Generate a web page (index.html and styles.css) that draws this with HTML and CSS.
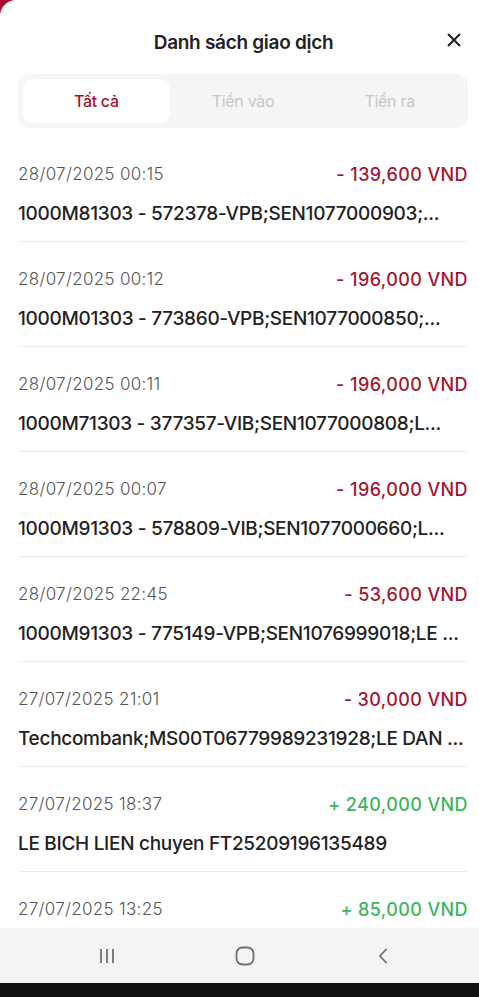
FILE: index.html
```html
<!DOCTYPE html>
<html lang="vi">
<head>
    <meta charset="UTF-8">
    <meta name="viewport" content="width=device-width, initial-scale=1.0">
    <title>Danh sách giao dịch</title>
    <link rel="stylesheet" href="styles.css">
</head>
<body>

    <div class="sheet">
        <!-- Header -->
        <div class="header">
            <h1>Danh sách giao dịch</h1>
            <span class="close">
                <svg width="14" height="14" viewBox="0 0 14 14">
                    <path d="M1.5 1.5 L12.5 12.5 M12.5 1.5 L1.5 12.5" stroke="#1f1f1f" stroke-width="2" stroke-linecap="round"/>
                </svg>
            </span>
        </div>

        <!-- Tabs -->
        <div class="tabs">
            <div class="tab active">Tất cả</div>
            <div class="tab">Tiền vào</div>
            <div class="tab">Tiền ra</div>
        </div>

        <!-- Transaction list -->
        <div class="list">
            <div class="item">
                <div class="top">
                    <span class="date">28/07/2025 00:15</span>
                    <span class="amount out">- 139,600 VND</span>
                </div>
                <div class="desc">1000M81303 - 572378-VPB;SEN1077000903;...</div>
            </div>
            <div class="item">
                <div class="top">
                    <span class="date">28/07/2025 00:12</span>
                    <span class="amount out">- 196,000 VND</span>
                </div>
                <div class="desc">1000M01303 - 773860-VPB;SEN1077000850;...</div>
            </div>
            <div class="item">
                <div class="top">
                    <span class="date">28/07/2025 00:11</span>
                    <span class="amount out">- 196,000 VND</span>
                </div>
                <div class="desc">1000M71303 - 377357-VIB;SEN1077000808;L...</div>
            </div>
            <div class="item">
                <div class="top">
                    <span class="date">28/07/2025 00:07</span>
                    <span class="amount out">- 196,000 VND</span>
                </div>
                <div class="desc">1000M91303 - 578809-VIB;SEN1077000660;L...</div>
            </div>
            <div class="item">
                <div class="top">
                    <span class="date">28/07/2025 22:45</span>
                    <span class="amount out">- 53,600 VND</span>
                </div>
                <div class="desc">1000M91303 - 775149-VPB;SEN1076999018;LE ...</div>
            </div>
            <div class="item">
                <div class="top">
                    <span class="date">27/07/2025 21:01</span>
                    <span class="amount out">- 30,000 VND</span>
                </div>
                <div class="desc">Techcombank;MS00T06779989231928;LE DAN ...</div>
            </div>
            <div class="item">
                <div class="top">
                    <span class="date">27/07/2025 18:37</span>
                    <span class="amount in">+ 240,000 VND</span>
                </div>
                <div class="desc">LE BICH LIEN chuyen FT25209196135489</div>
            </div>
            <div class="item last">
                <div class="top">
                    <span class="date">27/07/2025 13:25</span>
                    <span class="amount in">+ 85,000 VND</span>
                </div>
            </div>
        </div>
    </div>

    <!-- Android navigation bar -->
    <div class="navbar">
        <svg width="16" height="16" viewBox="0 0 16 16">
            <path d="M2 1 V15 M8 1 V15 M14 1 V15" stroke="#707070" stroke-width="1.8"/>
        </svg>
        <svg width="20" height="20" viewBox="0 0 20 20">
            <rect x="1.5" y="1.5" width="17" height="17" rx="6" fill="none" stroke="#707070" stroke-width="1.8"/>
        </svg>
        <svg width="12" height="18" viewBox="0 0 12 18">
            <path d="M9.5 2 L3 9 L9.5 16" fill="none" stroke="#707070" stroke-width="1.8"/>
        </svg>
    </div>
    <div class="bottom-bar"></div>

</body>
</html>
```

FILE: styles.css
```css
body {
    font-family: 'Inter', sans-serif;
    margin: 0;
    padding: 0;
    background-color: #a3122c;
    height: 997px;
    display: flex;
    flex-direction: column;
    overflow: hidden;
    color: #222;
}

.sheet {
    background: white;
    border-radius: 16px 0 0 0;
    flex: 1;
    overflow: hidden;
    padding: 0 10px 0 18px;
}

.header {
    display: flex;
    justify-content: center;
    align-items: center;
    height: 84px;
    position: relative;
}

.header h1 {
    margin: 0;
    font-size: 19px;
    font-weight: 600;
    color: #222;
    letter-spacing: -0.3px;
}

.close {
    position: absolute;
    right: 8px;
    top: 31px;
}

.tabs {
    display: flex;
    background-color: #f5f5f5;
    border-radius: 12px;
    padding: 5px;
    margin: -10px 0 0 0;
    width: 440px;
}

.tab {
    flex: 1;
    text-align: center;
    height: 44px;
    line-height: 44px;
    font-size: 16px;
    color: #c6c6c6;
    border-radius: 10px;
    letter-spacing: -0.3px;
}

.tab.active {
    background-color: white;
    color: #a3122c;
    font-weight: 500;
}

.list {
    padding-top: 13px;
}

.item {
    border-bottom: 1px solid #ececec;
    padding: 25px 0 15px 0;
    margin-right: 1px;
}

.item:first-child {
    padding-top: 21px;
}

.item.last {
    border-bottom: none;
}

.top {
    display: flex;
    justify-content: space-between;
    align-items: center;
    height: 24px;
}

.date {
    font-size: 17px;
    color: #555;
    font-weight: 300;
    letter-spacing: 0.3px;
}

.amount {
    font-size: 18px;
    font-weight: 500;
    letter-spacing: 0.4px;
}

.amount.out {
    color: #a3162e;
}

.amount.in {
    color: #3cb55a;
}

.desc {
    margin-top: 16px;
    font-size: 19px;
    font-weight: 500;
    line-height: 24px;
    color: #222;
    white-space: nowrap;
    overflow: hidden;
    text-overflow: ellipsis;
    letter-spacing: -0.3px;
}

.navbar {
    height: 55px;
    background-color: #f4f4f4;
    display: grid;
    grid-template-columns: repeat(3, 138px);
    justify-content: center;
    justify-items: center;
    align-items: center;
    padding-left: 10px;
}

.bottom-bar {
    height: 14px;
    background-color: #111;
}
```
